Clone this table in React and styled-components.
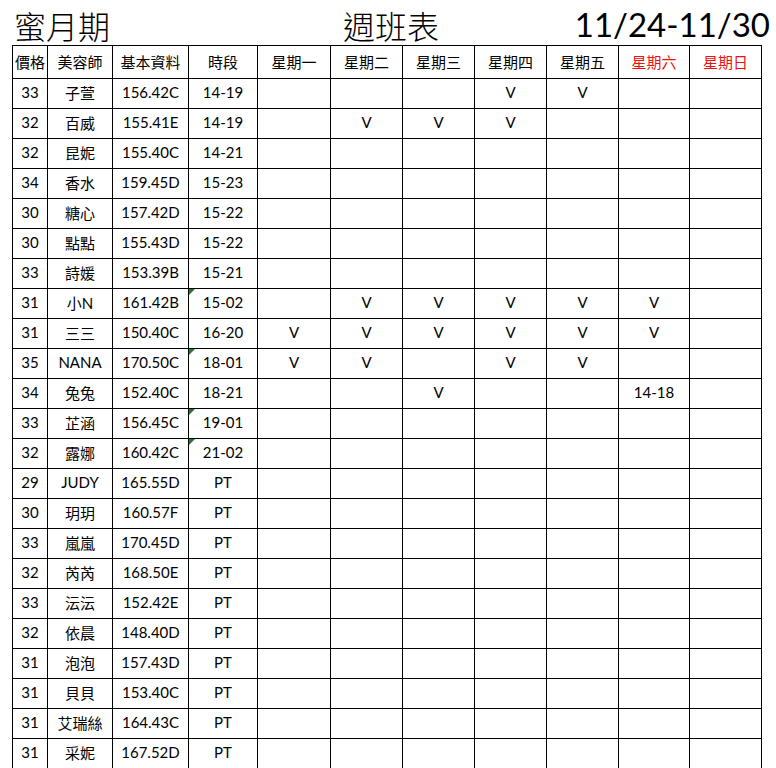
import React from "react";
import styled, { createGlobalStyle } from "styled-components";

const GlobalStyle = createGlobalStyle`
  html, body {
    margin: 0;
    padding: 0;
    background: #ffffff;
  }
`;

// Whole sheet
const Sheet = styled.div`
  width: 776px;
  height: 768px;
  overflow: hidden;
  background: #ffffff;
  font-family: Lato, "Noto Sans CJK TC", sans-serif;
  color: #000;
`;

// Title line above the grid
const TitleBar = styled.div`
  display: flex;
  align-items: flex-end;
  height: 45px;
  padding-left: 14px;
  box-sizing: border-box;
`;

const Brand = styled.div`
  width: 329px;
  font-family: "Noto Sans CJK TC", serif;
  font-size: 32px;
  font-weight: 300;
  line-height: 40px;
`;

const Heading = styled.div`
  font-family: "Noto Sans CJK TC", serif;
  font-size: 32px;
  font-weight: 300;
  line-height: 40px;
`;

const DateRange = styled.div`
  margin-left: auto;
  margin-right: 6px;
  font-family: Lato, sans-serif;
  font-size: 33px;
  line-height: 42px;
`;

// Schedule grid
const Grid = styled.table`
  margin-left: 12px;
  border-collapse: collapse;
  table-layout: fixed;
  width: 750px;
  font-size: 15px;
`;

const HeadCell = styled.th`
  height: 30px;
  padding: 0 0 2px;
  border: 1px solid #000;
  font-weight: 400;
  text-align: center;
  white-space: nowrap;
  overflow: hidden;
  color: ${({ weekend }) => (weekend ? "#ee1111" : "#000")};
`;

const Cell = styled.td`
  position: relative;
  height: 26px;
  padding: 0 0 3px;
  border: 1px solid #000;
  text-align: center;
  vertical-align: middle;
  white-space: nowrap;
`;

// Excel style green corner flag
const Flag = styled.span`
  position: absolute;
  left: 0;
  top: 0;
  width: 0;
  height: 0;
  border-top: 6px solid #1f7a32;
  border-right: 6px solid transparent;
`;

const widths = [35, 65, 76, 69, 73, 72, 72, 72, 72, 71, 72];

const days = [
  { label: "星期一" },
  { label: "星期二" },
  { label: "星期三" },
  { label: "星期四" },
  { label: "星期五" },
  { label: "星期六", weekend: true },
  { label: "星期日", weekend: true },
];

const rows = [
  ["33", "子萱", "156.42C", "14-19", false, "", "", "", "V", "V", "", ""],
  ["32", "百威", "155.41E", "14-19", false, "", "V", "V", "V", "", "", ""],
  ["32", "昆妮", "155.40C", "14-21", false],
  ["34", "香水", "159.45D", "15-23", false],
  ["30", "糖心", "157.42D", "15-22", false],
  ["30", "點點", "155.43D", "15-22", false],
  ["33", "詩媛", "153.39B", "15-21", false],
  ["31", "小N", "161.42B", "15-02", true, "", "V", "V", "V", "V", "V", ""],
  ["31", "三三", "150.40C", "16-20", false, "V", "V", "V", "V", "V", "V", ""],
  ["35", "NANA", "170.50C", "18-01", true, "V", "V", "", "V", "V", "", ""],
  ["34", "兔兔", "152.40C", "18-21", false, "", "", "V", "", "", "14-18", ""],
  ["33", "芷涵", "156.45C", "19-01", true],
  ["32", "露娜", "160.42C", "21-02", true],
  ["29", "JUDY", "165.55D", "PT", false],
  ["30", "玥玥", "160.57F", "PT", false],
  ["33", "嵐嵐", "170.45D", "PT", false],
  ["32", "芮芮", "168.50E", "PT", false],
  ["33", "沄沄", "152.42E", "PT", false],
  ["32", "依晨", "148.40D", "PT", false],
  ["31", "泡泡", "157.43D", "PT", false],
  ["31", "貝貝", "153.40C", "PT", false],
  ["31", "艾瑞絲", "164.43C", "PT", false],
  ["31", "采妮", "167.52D", "PT", false],
];

export default function App() {
  return (
    <Sheet>
      <GlobalStyle />
      <TitleBar>
        <Brand>蜜月期</Brand>
        <Heading>週班表</Heading>
        <DateRange>11/24-11/30</DateRange>
      </TitleBar>
      <Grid>
        <colgroup>
          {widths.map((w, i) => (
            <col key={i} style={{ width: w }} />
          ))}
        </colgroup>
        <thead>
          <tr>
            <HeadCell>價格</HeadCell>
            <HeadCell>美容師</HeadCell>
            <HeadCell>基本資料</HeadCell>
            <HeadCell>時段</HeadCell>
            {days.map((d) => (
              <HeadCell key={d.label} weekend={d.weekend}>
                {d.label}
              </HeadCell>
            ))}
          </tr>
        </thead>
        <tbody>
          {rows.map((r, idx) => {
            const [price, name, info, slot, flagged, ...marks] = r;
            return (
              <tr key={idx}>
                <Cell>{price}</Cell>
                <Cell>{name}</Cell>
                <Cell>{info}</Cell>
                <Cell>
                  {flagged && <Flag />}
                  {slot}
                </Cell>
                {days.map((d, i) => (
                  <Cell key={d.label}>{marks[i] || ""}</Cell>
                ))}
              </tr>
            );
          })}
        </tbody>
      </Grid>
    </Sheet>
  );
}
